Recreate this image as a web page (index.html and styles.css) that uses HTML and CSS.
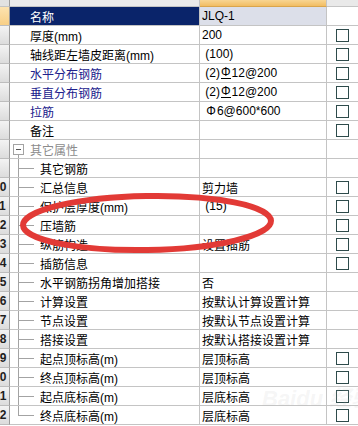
FILE: index.html
```html
<!DOCTYPE html>
<html lang="zh-CN">
<head>
    <meta charset="UTF-8">
    <title>属性编辑</title>
    <link rel="stylesheet" href="styles.css">
</head>
<body>
    <div class="sheet">
        <div class="grid">
            <!-- 表头 -->
            <div class="hd hd_num"></div>
            <div class="hd"></div>
            <div class="hd hd_val"></div>
            <div class="hd hd_chk"></div>

            <div class="num cur"><span>1</span></div>
            <div class="name sel">名称</div>
            <div class="val sel_val">JLQ-1</div>
            <div class="chk"></div>

            <div class="num"><span>2</span></div>
            <div class="name">厚度(mm)</div>
            <div class="val">200</div>
            <div class="chk"><i class="box"></i></div>

            <div class="num"><span>3</span></div>
            <div class="name">轴线距左墙皮距离(mm)</div>
            <div class="val">&nbsp;(100)</div>
            <div class="chk"><i class="box"></i></div>

            <div class="num"><span>4</span></div>
            <div class="name blue">水平分布钢筋</div>
            <div class="val">&nbsp;(2)<b class="bar3">Φ</b>12@200</div>
            <div class="chk"><i class="box"></i></div>

            <div class="num"><span>5</span></div>
            <div class="name blue">垂直分布钢筋</div>
            <div class="val">&nbsp;(2)<b class="bar3">Φ</b>12@200</div>
            <div class="chk"><i class="box"></i></div>

            <div class="num"><span>6</span></div>
            <div class="name blue">拉筋</div>
            <div class="val">&nbsp;<b class="bar1">Φ</b>6@600*600</div>
            <div class="chk"><i class="box"></i></div>

            <div class="num"><span>7</span></div>
            <div class="name">备注</div>
            <div class="val"></div>
            <div class="chk"><i class="box"></i></div>

            <!-- 其它属性 -->
            <div class="num"><span>8</span></div>
            <div class="name group"><i class="toggle"></i><em>其它属性</em></div>
            <div class="val"></div>
            <div class="chk"></div>

            <div class="num"><span>9</span></div>
            <div class="name tree"><i class="branch"></i>其它钢筋</div>
            <div class="val"></div>
            <div class="chk"></div>

            <div class="num"><span>10</span></div>
            <div class="name tree"><i class="branch"></i>汇总信息</div>
            <div class="val">剪力墙</div>
            <div class="chk"><i class="box"></i></div>

            <div class="num"><span>11</span></div>
            <div class="name tree"><i class="branch"></i>保护层厚度(mm)</div>
            <div class="val">&nbsp;(15)</div>
            <div class="chk"><i class="box"></i></div>

            <div class="num"><span>12</span></div>
            <div class="name tree"><i class="branch"></i>压墙筋</div>
            <div class="val"></div>
            <div class="chk"><i class="box"></i></div>

            <div class="num"><span>13</span></div>
            <div class="name tree"><i class="branch"></i>纵筋构造</div>
            <div class="val">设置插筋</div>
            <div class="chk"><i class="box"></i></div>

            <div class="num"><span>14</span></div>
            <div class="name tree"><i class="branch"></i>插筋信息</div>
            <div class="val"></div>
            <div class="chk"><i class="box"></i></div>

            <div class="num"><span>15</span></div>
            <div class="name tree"><i class="branch"></i>水平钢筋拐角增加搭接</div>
            <div class="val">否</div>
            <div class="chk"></div>

            <div class="num"><span>16</span></div>
            <div class="name tree"><i class="branch"></i>计算设置</div>
            <div class="val">按默认计算设置计算</div>
            <div class="chk"></div>

            <div class="num"><span>17</span></div>
            <div class="name tree"><i class="branch"></i>节点设置</div>
            <div class="val">按默认节点设置计算</div>
            <div class="chk"></div>

            <div class="num"><span>18</span></div>
            <div class="name tree"><i class="branch"></i>搭接设置</div>
            <div class="val">按默认搭接设置计算</div>
            <div class="chk"></div>

            <div class="num"><span>19</span></div>
            <div class="name tree"><i class="branch"></i>起点顶标高(m)</div>
            <div class="val">层顶标高</div>
            <div class="chk"><i class="box"></i></div>

            <div class="num"><span>20</span></div>
            <div class="name tree"><i class="branch"></i>终点顶标高(m)</div>
            <div class="val">层顶标高</div>
            <div class="chk"><i class="box"></i></div>

            <div class="num"><span>21</span></div>
            <div class="name tree"><i class="branch"></i>起点底标高(m)</div>
            <div class="val">层底标高</div>
            <div class="chk"><i class="box"></i></div>

            <div class="num"><span>22</span></div>
            <div class="name tree"><i class="branch end"></i>终点底标高(m)</div>
            <div class="val">层底标高</div>
            <div class="chk"><i class="box"></i></div>
        </div>

        <!-- 水印 -->
        <div class="mark">Bai<span>du</span> 经验</div>

        <!-- 红圈标注 -->
        <svg class="circle" width="358" height="426" viewBox="0 0 358 426">
            <ellipse cx="147" cy="223" rx="124" ry="27" fill="none" stroke="#e23a36" stroke-width="6" transform="rotate(-1 147 223)"/>
        </svg>
    </div>
</body>
</html>
```
FILE: styles.css
```css
* {
    padding: 0;
    margin: 0;
}

body {
    background: #fff;
}

.sheet {
    width: 358px;
    height: 426px;
    position: relative;
    overflow: hidden;
    background: #fff;
}

.grid {
    display: grid;
    grid-template-columns: 10px 190px 127px 31px;
    grid-template-rows: 7px;
    grid-auto-rows: 19px;
    font-family: "Liberation Sans", "Noto Sans CJK SC", sans-serif;
    font-size: 12px;
    color: #000;
}

.grid>div {
    box-sizing: border-box;
    border-right: 1px solid #c4c4c4;
    border-bottom: 1px solid #c4c4c4;
    display: flex;
    align-items: center;
    overflow: hidden;
    white-space: nowrap;
}

/* 表头 */
.hd {
    background: #ebebeb;
}

.hd_num {
    background: #e2e2e2;
    border-right-color: #9c9c9c !important;
}

.hd_val {
    background: linear-gradient(#f8d592, #f2bd62);
    border-bottom-color: #d9a54c !important;
}

.hd_chk {
    background: #e9e9e9;
    border-right: none !important;
}

/* 行号 */
.num {
    background: linear-gradient(#f3f3f3, #dcdcdc);
    border-right-color: #9c9c9c !important;
    border-bottom-color: #bdbdbd !important;
    font-weight: bold;
    color: #1e1e1e;
}

.num>span {
    margin-left: -7px;
}

.num.cur {
    background: linear-gradient(#fde3b0, #f8cf86);
}

.name {
    padding-left: 20px;
}

.name.sel {
    background: #0a246a;
    color: #fff;
}

.name.blue {
    color: #20208c;
}

.val {
    padding-left: 2px;
}

.val.sel_val {
    background: #dcdfe9;
}

.val b {
    font-weight: normal;
    display: inline-block;
    margin: 0 1px;
    line-height: 11px;
}

.val .bar3 {
    border-bottom: 1px solid #000;
}

.chk {
    justify-content: center;
    border-right: none !important;
}

.box {
    width: 13px;
    height: 13px;
    box-sizing: border-box;
    border: 1px solid #2e4b4b;
    background: #fff;
    margin-left: -1px;
}

/* 树形线 */
.name.group {
    padding-left: 3px;
    background: linear-gradient(#a3a3a3, #a3a3a3) 8px 14px / 1px 100% no-repeat;
}

.toggle {
    width: 11px;
    height: 11px;
    box-sizing: border-box;
    border: 1px solid #a3a3a3;
    background: #fff linear-gradient(#555, #555) center / 5px 1px no-repeat;
}

.name.group>em {
    font-style: normal;
    color: #8c8c8c;
    margin-left: 6px;
}

.name.tree {
    padding-left: 0;
}

.branch {
    flex: none;
    width: 24px;
    height: 100%;
    margin-right: 6px;
    background:
        linear-gradient(#a3a3a3, #a3a3a3) 8px 0 / 1px 100% no-repeat,
        linear-gradient(#a3a3a3, #a3a3a3) 8px 9px / 16px 1px no-repeat;
}

.branch.end {
    background:
        linear-gradient(#a3a3a3, #a3a3a3) 8px 0 / 1px 10px no-repeat,
        linear-gradient(#a3a3a3, #a3a3a3) 8px 9px / 16px 1px no-repeat;
}

.mark {
    position: absolute;
    left: 262px;
    top: 380px;
    font-family: "Liberation Sans", "Noto Sans CJK SC", sans-serif;
    font-size: 22px;
    font-weight: bold;
    font-style: italic;
    color: rgba(190, 190, 190, 0.14);
    white-space: nowrap;
}

.circle {
    position: absolute;
    left: 0;
    top: 0;
    pointer-events: none;
}
```
